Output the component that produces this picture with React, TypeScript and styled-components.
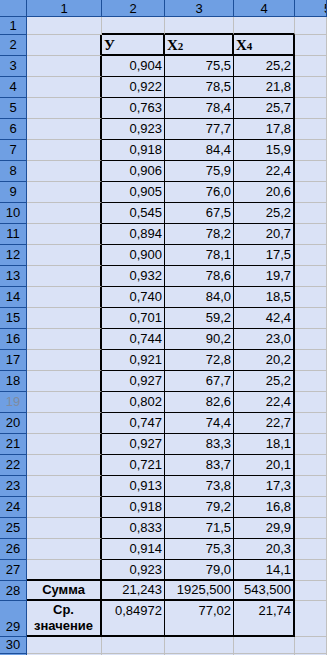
import React from 'react';
import styled, { createGlobalStyle } from 'styled-components';

type B = 'g' | 't' | 'T';

const GlobalStyle = createGlobalStyle`
  html, body {
    margin: 0;
    padding: 0;
    overflow: hidden;
    background: #dae2f6;
  }
  * {
    box-sizing: border-box;
  }
`;

const HEAD_BG = '#6f9fe3';
const HEAD_LINE = '#1d4f99';
const CELL_BG = '#dae2f6';
const GRID = '#c0c0c0';

const line = (b: B) => (b === 'T' ? '2px solid #000' : b === 't' ? '1px solid #000' : `1px solid ${GRID}`);

const Sheet = styled.div`
  display: grid;
  grid-template-columns: 27px 75px 63px 69px 61px 1fr;
  grid-template-rows: 17px 18px 21px repeat(25, 21px) 20px 36px 17px 21px;
  width: 327px;
  overflow: hidden;
  font-family: 'Liberation Sans', Arial, sans-serif;
  font-size: 13px;
  color: #000;
`;

const ColHead = styled.div<{ $clip?: boolean }>`
  background: ${HEAD_BG};
  border-right: 1px solid ${HEAD_LINE};
  border-bottom: 1px solid ${HEAD_LINE};
  display: flex;
  align-items: center;
  justify-content: ${(p) => (p.$clip ? 'flex-start' : 'center')};
  padding-left: ${(p) => (p.$clip ? '29px' : '0')};
  overflow: hidden;
  line-height: 1;
`;

const RowHead = styled.div<{ $bottom?: boolean; $dim?: boolean }>`
  background: ${HEAD_BG};
  border-right: 1px solid ${HEAD_LINE};
  border-bottom: 1px solid ${HEAD_LINE};
  display: flex;
  align-items: ${(p) => (p.$bottom ? 'flex-end' : 'center')};
  justify-content: center;
  padding-bottom: ${(p) => (p.$bottom ? '1px' : '0')};
  color: ${(p) => (p.$dim ? '#7f8ba0' : '#000')};
  line-height: 16px;
`;

const Cell = styled.div<{ $r: B; $b: B; $align?: 'left' | 'center' | 'right'; $top?: boolean; $bold?: boolean }>`
  background: ${CELL_BG};
  border-right: ${(p) => line(p.$r)};
  border-bottom: ${(p) => line(p.$b)};
  display: flex;
  flex-direction: column;
  justify-content: ${(p) => (p.$top ? 'flex-start' : 'center')};
  align-items: ${(p) => (p.$align === 'right' ? 'flex-end' : p.$align === 'center' ? 'center' : 'flex-start')};
  text-align: ${(p) => p.$align || 'left'};
  padding: ${(p) => (p.$top ? '2px 2px 0 2px' : '0 2px')};
  font-weight: ${(p) => (p.$bold ? 700 : 400)};
  line-height: 16px;
  white-space: nowrap;
  overflow: hidden;
`;

const VarName = styled.span`
  font-family: 'Liberation Serif', 'Times New Roman', serif;
  font-weight: 700;
  font-size: 15px;
  line-height: 1;
  padding-top: 2px;
`;

const Sub = styled.span`
  font-size: 11px;
`;

const data: string[][] = [
  ['0,904', '75,5', '25,2'],
  ['0,922', '78,5', '21,8'],
  ['0,763', '78,4', '25,7'],
  ['0,923', '77,7', '17,8'],
  ['0,918', '84,4', '15,9'],
  ['0,906', '75,9', '22,4'],
  ['0,905', '76,0', '20,6'],
  ['0,545', '67,5', '25,2'],
  ['0,894', '78,2', '20,7'],
  ['0,900', '78,1', '17,5'],
  ['0,932', '78,6', '19,7'],
  ['0,740', '84,0', '18,5'],
  ['0,701', '59,2', '42,4'],
  ['0,744', '90,2', '23,0'],
  ['0,921', '72,8', '20,2'],
  ['0,927', '67,7', '25,2'],
  ['0,802', '82,6', '22,4'],
  ['0,747', '74,4', '22,7'],
  ['0,927', '83,3', '18,1'],
  ['0,721', '83,7', '20,1'],
  ['0,913', '73,8', '17,3'],
  ['0,918', '79,2', '16,8'],
  ['0,833', '71,5', '29,9'],
  ['0,914', '75,3', '20,3'],
  ['0,923', '79,0', '14,1'],
];

// border on the right side of a cell
const rightOf = (r: number, c: number): B => {
  if (c === 1) return r >= 2 && r <= 29 ? 'T' : 'g';
  if (c === 2 || c === 3) {
    if (r === 2) return 'T';
    if (r >= 3 && r <= 29) return 't';
    return 'g';
  }
  if (c === 4) return r >= 2 && r <= 29 ? 'T' : 'g';
  return 'g';
};

// border under a cell
const bottomOf = (r: number, c: number): B => {
  const inTable = c >= 2 && c <= 4;
  if ((r === 1 || r === 2) && inTable) return 'T';
  if (r >= 3 && r <= 26 && inTable) return 't';
  if (r >= 27 && r <= 29 && c >= 1 && c <= 4) return 'T';
  return 'g';
};

const headers: Record<number, React.ReactNode> = {
  2: <VarName>У</VarName>,
  3: (
    <VarName>
      X<Sub>2</Sub>
    </VarName>
  ),
  4: (
    <VarName>
      X<Sub>4</Sub>
    </VarName>
  ),
};

const cellContent = (r: number, c: number) => {
  if (r === 2) return { node: headers[c] ?? null, align: 'left' as const };
  if (r >= 3 && r <= 27 && c >= 2 && c <= 4) return { node: data[r - 3][c - 2], align: 'right' as const };
  if (r === 28) {
    if (c === 1) return { node: 'Сумма', align: 'center' as const, bold: true };
    const sums = ['21,243', '1925,500', '543,500'];
    if (c <= 4) return { node: sums[c - 2], align: 'right' as const };
  }
  if (r === 29) {
    if (c === 1)
      return {
        node: (
          <>
            <span>Ср.</span>
            <span>значение</span>
          </>
        ),
        align: 'center' as const,
        bold: true,
      };
    const means = ['0,84972', '77,02', '21,74'];
    if (c <= 4) return { node: means[c - 2], align: 'right' as const, top: true };
  }
  return { node: null, align: 'left' as const };
};

const App = () => {
  const rows = Array.from({ length: 31 }, (_, i) => i + 1);
  const cols = [1, 2, 3, 4, 5];
  return (
    <>
      <GlobalStyle />
      <Sheet>
        <ColHead />
        {cols.map((c) => (
          <ColHead key={`h${c}`} $clip={c === 5}>
            {c}
          </ColHead>
        ))}
        {rows.map((r) => (
          <React.Fragment key={r}>
            {/* row 31 only peeks in under the bottom edge, its label is not visible */}
            <RowHead $bottom={r === 29} $dim={r === 19}>
              {r <= 30 ? r : null}
            </RowHead>
            {cols.map((c) => {
              const ct = cellContent(r, c);
              return (
                <Cell
                  key={c}
                  $r={rightOf(r, c)}
                  $b={bottomOf(r, c)}
                  $align={ct.align}
                  $bold={ct.bold}
                  $top={ct.top}
                >
                  {ct.node}
                </Cell>
              );
            })}
          </React.Fragment>
        ))}
      </Sheet>
    </>
  );
};

export default App;
